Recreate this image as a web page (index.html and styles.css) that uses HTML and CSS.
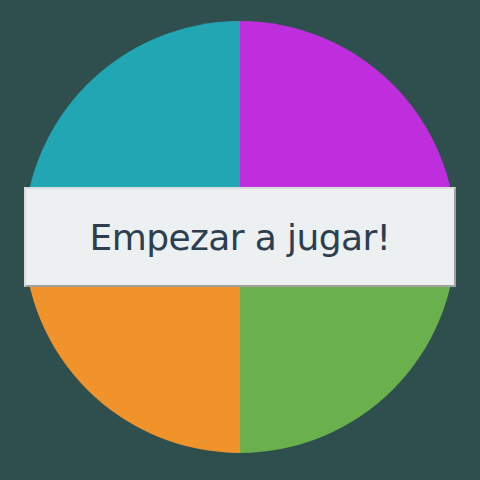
FILE: index.html
```html
<!DOCTYPE html>
<html lang="es">
<head>
<meta charset="utf-8">
<title>Juego</title>
<link rel="stylesheet" href="styles.css">
</head>
<body>
<main class="stage">
  <div class="wheel">
    <div class="quad q-teal"></div>
    <div class="quad q-purple"></div>
    <div class="quad q-orange"></div>
    <div class="quad q-green"></div>
    <button class="start">Empezar a jugar!</button>
  </div>
</main>
</body>
</html>
```
FILE: styles.css
```css
html, body {
  margin: 0;
  padding: 0;
  background: #2f4f4f;
}
.stage {
  display: flex;
  justify-content: center;
  padding-top: 21px;
}
.wheel {
  position: relative;
  width: 432px;
  height: 432px;
  border-radius: 50%;
  display: grid;
  grid-template-columns: 1fr 1fr;
  grid-template-rows: 1fr 1fr;
}
.quad { width: 100%; height: 100%; }
.q-teal { background: #22a6b3; border-top-left-radius: 216px; }
.q-purple { background: #be2edd; border-top-right-radius: 216px; }
.q-orange { background: #f0932b; border-bottom-left-radius: 216px; }
.q-green { background: #6ab04c; border-bottom-right-radius: 216px; }
.start {
  position: absolute;
  left: 0;
  top: 166px;
  width: 432px;
  height: 100px;
  margin: 0;
  padding: 0;
  background: #ecf0f1;
  color: #2c3e50;
  font-family: "DejaVu Sans", sans-serif;
  font-size: 36px;
  letter-spacing: -0.6px;
  border-style: solid;
  border-width: 2px;
  border-color: #dadedf #a0a0a0 #a0a0a0 #dadedf;
  cursor: pointer;
}
```
